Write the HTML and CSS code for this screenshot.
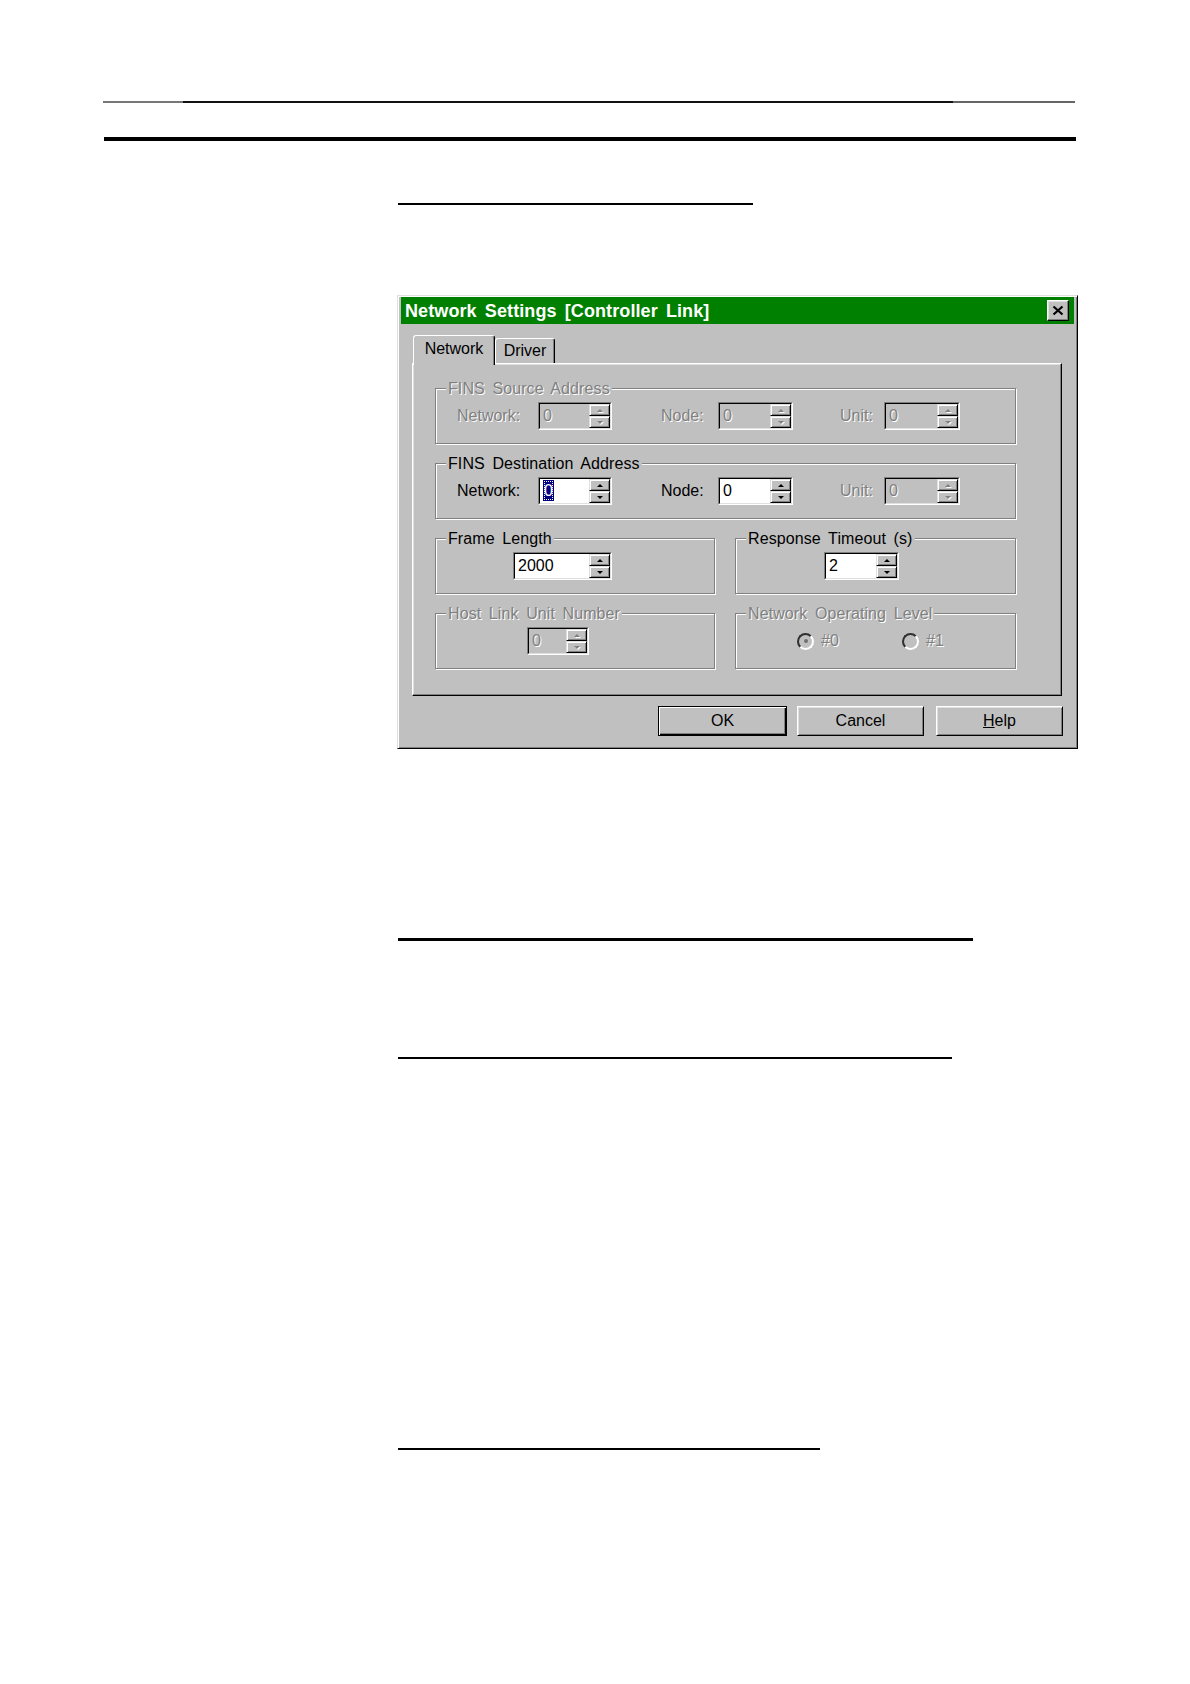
FILE: index.html
```html
<!DOCTYPE html>
<html lang="en">
<head>
<meta charset="utf-8">
<title>Network Settings [Controller Link]</title>
<link rel="stylesheet" href="styles.css">
</head>
<body>
<div class="page">
  <div class="rule-top"></div>
  <div class="rule-thick"></div>
  <div class="main">
    <div class="rule-a"></div>

    <div class="dialog">
      <div class="titlebar">
        <span class="title">Network Settings [Controller Link]</span>
        <span class="close-btn">
          <svg width="12" height="11" viewBox="0 0 12 11"><path d="M1.5 1.5 L10.5 9.5 M10.5 1.5 L1.5 9.5" stroke="#000" stroke-width="2.2" fill="none"/></svg>
        </span>
      </div>
      <div class="dlg-body">
        <div class="tabs">
          <div class="tab tab-active">Network</div>
          <div class="tab">Driver</div>
        </div>
        <div class="panel">
          <div class="panel-grid">
            <div class="grp grp-wide disabled">
              <span class="grp-title">FINS Source Address</span>
              <span class="lbl l-net">Network:</span>
              <div class="spin w74"><div class="spin-in"><span class="val">0</span><div class="arrows"><span class="arr"><i class="up"></i></span><span class="arr"><i class="dn"></i></span></div></div></div>
              <span class="lbl l-node">Node:</span>
              <div class="spin w75"><div class="spin-in"><span class="val">0</span><div class="arrows"><span class="arr"><i class="up"></i></span><span class="arr"><i class="dn"></i></span></div></div></div>
              <span class="lbl l-unit">Unit:</span>
              <div class="spin w76"><div class="spin-in"><span class="val">0</span><div class="arrows"><span class="arr"><i class="up"></i></span><span class="arr"><i class="dn"></i></span></div></div></div>
            </div>

            <div class="grp grp-wide">
              <span class="grp-title">FINS Destination Address</span>
              <span class="lbl l-net">Network:</span>
              <div class="spin w74"><div class="spin-in"><span class="val"><span class="sel">0</span></span><div class="arrows"><span class="arr"><i class="up"></i></span><span class="arr"><i class="dn"></i></span></div></div></div>
              <span class="lbl l-node">Node:</span>
              <div class="spin w75"><div class="spin-in"><span class="val">0</span><div class="arrows"><span class="arr"><i class="up"></i></span><span class="arr"><i class="dn"></i></span></div></div></div>
              <span class="lbl l-unit disabled">Unit:</span>
              <div class="spin w76 disabled"><div class="spin-in"><span class="val">0</span><div class="arrows"><span class="arr"><i class="up"></i></span><span class="arr"><i class="dn"></i></span></div></div></div>
            </div>

            <div class="grp pad-frame">
              <span class="grp-title">Frame Length</span>
              <div class="spin w99"><div class="spin-in"><span class="val">2000</span><div class="arrows"><span class="arr"><i class="up"></i></span><span class="arr"><i class="dn"></i></span></div></div></div>
            </div>

            <div class="grp pad-resp">
              <span class="grp-title">Response Timeout (s)</span>
              <div class="spin w75"><div class="spin-in"><span class="val">2</span><div class="arrows"><span class="arr"><i class="up"></i></span><span class="arr"><i class="dn"></i></span></div></div></div>
            </div>

            <div class="grp pad-host disabled">
              <span class="grp-title">Host Link Unit Number</span>
              <div class="spin w62"><div class="spin-in"><span class="val">0</span><div class="arrows"><span class="arr"><i class="up"></i></span><span class="arr"><i class="dn"></i></span></div></div></div>
            </div>

            <div class="grp pad-level disabled">
              <span class="grp-title">Network Operating Level</span>
              <div class="opt opt-first"><span class="radio checked"></span><span>#0</span></div>
              <div class="opt"><span class="radio"></span><span>#1</span></div>
            </div>
          </div>
        </div>
        <div class="buttons">
          <div class="btn btn-default btn-ok">OK</div>
          <div class="btn btn-cancel">Cancel</div>
          <div class="btn btn-help"><span><u>H</u>elp</span></div>
        </div>
      </div>
    </div>

    <div class="rule-b"></div>
    <div class="rule-c"></div>
    <div class="rule-d"></div>
  </div>
</div>
</body>
</html>
```

FILE: styles.css
```css
* { box-sizing: border-box; }

html, body {
  margin: 0;
  padding: 0;
  background: #ffffff;
}

body {
  font-family: "Liberation Sans", Arial, sans-serif;
  color: #000;
}

.page {
  width: 1190px;
  min-height: 1684px;
  padding-top: 1px;
}

/* page rules */
.rule-top {
  margin: 100px 0 0 103px;
  width: 972px;
  height: 2px;
  background: linear-gradient(to right, #777 0, #777 80px, #111 80px, #111 850px, #666 850px, #666 100%);
}

.rule-thick {
  margin: 34px 0 0 104px;
  width: 972px;
  height: 4px;
  background: #000;
}

.main {
  margin-left: 398px;
}

.rule-a {
  margin-top: 62px;
  width: 355px;
  height: 2px;
  background: #000;
}

.rule-b {
  margin-top: 189px;
  width: 575px;
  height: 3px;
  background: #000;
}

.rule-c {
  margin-top: 116px;
  width: 554px;
  height: 2px;
  background: #000;
}

.rule-d {
  margin-top: 389px;
  width: 422px;
  height: 2px;
  background: #000;
}

/* dialog */
.dialog {
  margin: 90px 0 0 -1px;
  width: 681px;
  height: 454px;
  background: #c0c0c0;
  border: 1px solid;
  border-color: #dfdfdf #000 #000 #dfdfdf;
  box-shadow: inset 1px 1px 0 #fff, inset -1px -1px 0 #808080;
  padding: 1px 3px 0 3px;
  font-size: 16px;
  line-height: 18px;
}

.titlebar {
  height: 27px;
  background: #008000;
  display: flex;
  align-items: center;
  justify-content: space-between;
  padding-left: 4px;
}

.title {
  color: #fff;
  font-weight: bold;
  font-size: 18px;
  line-height: 20px;
  letter-spacing: 0.1px;
  word-spacing: 3px;
}

.close-btn {
  width: 22px;
  height: 21px;
  margin-right: 5px;
  background: #c0c0c0;
  border: 1px solid;
  border-color: #fff #000 #000 #fff;
  box-shadow: inset -1px -1px 0 #808080, inset 1px 1px 0 #dfdfdf;
  display: flex;
  align-items: center;
  justify-content: center;
}

.close-btn svg { display: block; }

.dlg-body {
  padding: 11px 11px 0 11px;
}

/* tabs */
.tabs {
  display: flex;
  align-items: flex-end;
  margin-left: 1px;
  height: 28px;
}

.tab {
  background: #c0c0c0;
  border: 1px solid;
  border-bottom: none;
  border-color: #fff #000 transparent #fff;
  border-radius: 3px 3px 0 0;
  box-shadow: inset -1px 0 0 #808080;
  display: flex;
  justify-content: center;
  width: 60px;
  height: 25px;
  padding-top: 3px;
}

.tab-active {
  position: relative;
  z-index: 1;
  width: 82px;
  height: 30px;
  margin-bottom: -2px;
  padding-top: 4px;
}

/* tab panel */
.panel {
  width: 650px;
  height: 333px;
  border: 1px solid;
  border-color: #fff #000 #000 #fff;
  box-shadow: inset -1px -1px 0 #808080, inset 1px 1px 0 #dfdfdf;
  padding: 24px 0 0 22px;
}

.panel-grid {
  display: grid;
  grid-template-columns: 280px 281px;
  grid-template-rows: 56px 56px 56px 56px;
  column-gap: 20px;
  row-gap: 19px;
}

.grp {
  position: relative;
  border: 1px solid #808080;
  box-shadow: 1px 1px 0 #fff, inset 1px 1px 0 #fff;
  display: flex;
  align-items: center;
}

.grp-wide {
  grid-column: 1 / -1;
  padding-left: 21px;
}

.grp-title {
  position: absolute;
  top: -9px;
  left: 10px;
  padding: 0 2px;
  background: #c0c0c0;
  line-height: 18px;
  white-space: nowrap;
  letter-spacing: 0.1px;
  word-spacing: 3px;
}

.pad-frame { padding-left: 77px; }
.pad-resp { padding-left: 88px; }
.pad-host { padding-left: 91px; }
.pad-level { padding-left: 61px; }

.lbl { white-space: nowrap; }
.l-net { width: 81px; }
.l-node { width: 57px; margin-left: 49px; }
.l-unit { width: 44px; margin-left: 47px; }

/* disabled look */
.disabled .grp-title,
.disabled .lbl,
.lbl.disabled,
.disabled .val,
.disabled .opt span:last-child {
  color: #808080;
  text-shadow: 1px 1px 0 #fff;
}

/* spin edit */
.spin {
  height: 28px;
  border: 1px solid;
  border-color: #808080 #fff #fff #808080;
}

.w62 { width: 62px; }
.w74 { width: 74px; }
.w75 { width: 75px; }
.w76 { width: 76px; }
.w99 { width: 99px; }

.spin-in {
  height: 100%;
  border: 1px solid;
  border-color: #000 #dfdfdf #dfdfdf #000;
  display: flex;
  background: #fff;
}

.disabled .spin-in,
.spin.disabled .spin-in {
  background: #c0c0c0;
}

.val {
  flex: 1;
  padding-left: 3px;
  padding-top: 1px;
  line-height: 21px;
  white-space: nowrap;
  overflow: hidden;
}

.sel {
  display: inline-block;
  background: #000080;
  color: #fff;
  padding: 0 1px;
  outline: 1px dotted #fff;
  outline-offset: -2px;
}

.arrows {
  width: 21px;
  display: flex;
  flex-direction: column;
}

.arr {
  flex: 1;
  background: #c0c0c0;
  border: 1px solid;
  border-color: #dfdfdf #000 #000 #dfdfdf;
  box-shadow: inset 1px 1px 0 #fff, inset -1px -1px 0 #808080;
  display: flex;
  align-items: center;
  justify-content: center;
}

.arr i {
  display: block;
  width: 0;
  height: 0;
  border-left: 3px solid transparent;
  border-right: 3px solid transparent;
}

.arr i.up { border-bottom: 3px solid #000; }
.arr i.dn { border-top: 3px solid #000; }

.disabled .arr i.up,
.spin.disabled .arr i.up { border-bottom-color: #808080; filter: drop-shadow(1px 1px 0 #fff); }
.disabled .arr i.dn,
.spin.disabled .arr i.dn { border-top-color: #808080; filter: drop-shadow(1px 1px 0 #fff); }

/* radios */
.opt {
  display: flex;
  align-items: center;
  gap: 7px;
}

.opt-first { width: 105px; }

.radio {
  position: relative;
  width: 17px;
  height: 17px;
  border-radius: 50%;
  border: 2px solid;
  border-color: #303030 #fff #fff #303030;
  background: #c0c0c0;
}

.radio.checked::after {
  content: "";
  position: absolute;
  left: 4.5px;
  top: 4.5px;
  width: 4px;
  height: 4px;
  border-radius: 50%;
  background: #707070;
}

/* buttons */
.buttons {
  display: flex;
  justify-content: flex-end;
  margin-top: 10px;
}

.btn {
  height: 30px;
  background: #c0c0c0;
  border: 1px solid;
  border-color: #fff #000 #000 #fff;
  box-shadow: inset 1px 1px 0 #dfdfdf, inset -1px -1px 0 #808080;
  display: flex;
  align-items: center;
  justify-content: center;
}

.btn-default {
  border-color: #000;
  box-shadow: inset 1px 1px 0 #fff, inset -1px -1px 0 #000, inset -2px -2px 0 #808080;
}

.btn-ok { width: 129px; }
.btn-cancel { width: 127px; margin-left: 10px; }
.btn-help { width: 127px; margin-left: 12px; }
```
